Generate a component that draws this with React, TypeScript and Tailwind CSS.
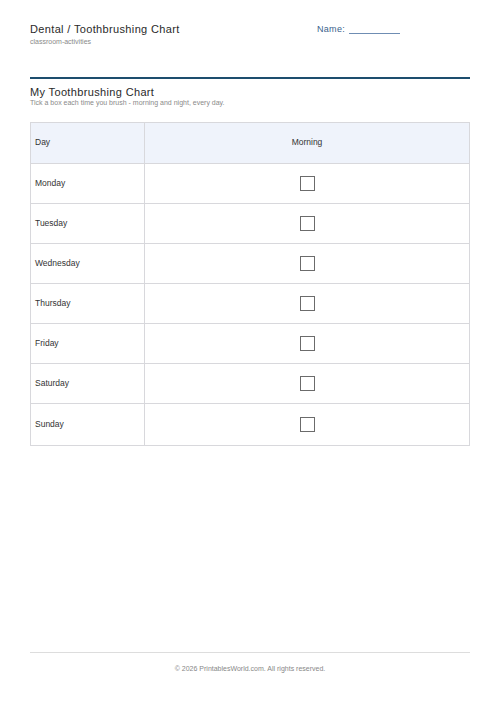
import React from "react";

const days = ["Monday", "Tuesday", "Wednesday", "Thursday", "Friday", "Saturday", "Sunday"];

export default function App() {
  return (
    <div
      className="w-[500px] h-[708px] bg-white px-[30px] flex flex-col"
      style={{ fontFamily: '"Liberation Sans", Arial, sans-serif' }}
    >
      <div className="flex justify-between pt-[22px] h-[77px]">
        <div>
          <div className="text-[11px] leading-[14px] text-[#2a2a2a] tracking-[0.35px]">Dental / Toothbrushing Chart</div>
          <div className="text-[7px] leading-[9px] mt-[1px] text-[#8a8a8a]">classroom-activities</div>
        </div>
        <div className="w-[153px] flex items-start pt-[2px]">
          <span className="text-[9px] leading-[11px] text-[#3a5f8c] tracking-[0.3px]">Name:</span>
          <span className="ml-[4px] w-[51px] h-[10px] border-b border-[#6f8db3]"></span>
        </div>
      </div>
      <div className="h-[1.5px] bg-[#1d4e6e]"></div>
      <div className="pt-[6px]">
        <div className="text-[11px] leading-[14px] text-[#2a2a2a] tracking-[0.35px]">My Toothbrushing Chart</div>
        <div className="text-[7px] leading-[8px] text-[#8a8a8a]">Tick a box each time you brush - morning and night, every day.</div>
      </div>
      <div className="mt-[15px] border border-[#d8d8dc]">
        <div className="flex h-[41px] bg-[#eff3fb] border-b border-[#d8d8dc]">
          <div className="w-[114px] border-r border-[#d8d8dc] flex items-center pl-[4px] text-[8.5px] text-[#333]">Day</div>
          <div className="flex-1 flex items-center justify-center text-[8.5px] text-[#333]">Morning</div>
        </div>
        {days.map((d, i) => (
          <div
            key={d}
            className={`flex ${i < days.length - 1 ? "h-[40px] border-b border-[#d8d8dc]" : "h-[41px]"}`}
          >
            <div className="w-[114px] border-r border-[#d8d8dc] flex items-center pl-[4px] text-[8.5px] text-[#333]">{d}</div>
            <div className="flex-1 flex items-center justify-center">
              <div className="w-[15px] h-[15px] border border-[#6b6b6b]"></div>
            </div>
          </div>
        ))}
      </div>
      <div className="flex-1"></div>
      <div className="border-t border-[#dddddd] h-[56px] pt-[11px] text-center text-[7px] text-[#888]">
        © 2026 PrintablesWorld.com. All rights reserved.
      </div>
    </div>
  );
}
